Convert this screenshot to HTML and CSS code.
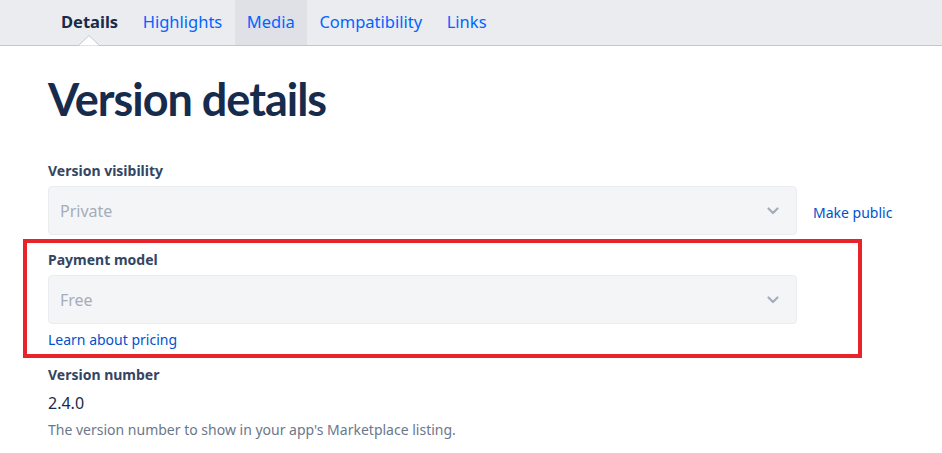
FILE: index.html
```html
<!DOCTYPE html>
<html lang="en">
<head>
<meta charset="utf-8">
<title>Version details</title>
<link rel="stylesheet" href="styles.css">
</head>
<body>
<nav class="tabs">
  <a class="tab tab-active">Details<svg class="caret" width="22" height="11" viewBox="0 0 22 11"><polygon points="0,11 11,0.5 22,11" fill="#ffffff" stroke="#C1C7D0" stroke-width="1"/></svg></a>
  <a class="tab">Highlights</a>
  <a class="tab tab-hover">Media</a>
  <a class="tab">Compatibility</a>
  <a class="tab">Links</a>
</nav>
<main class="content">
  <h1 class="title">Version details</h1>

  <div class="field">
    <div class="label">Version visibility</div>
    <div class="row">
      <div class="select">
        <span class="select-value">Private</span>
        <svg class="chevron" width="12" height="8" viewBox="0 0 12 8"><path d="M1.5 1.5 L6 6 L10.5 1.5" fill="none" stroke="#A5ADBA" stroke-width="2.2" stroke-linecap="round" stroke-linejoin="round"/></svg>
      </div>
      <a class="link side-link">Make public</a>
    </div>
  </div>

  <div class="field field-marked">
    <div class="label">Payment model</div>
    <div class="select">
      <span class="select-value">Free</span>
      <svg class="chevron" width="12" height="8" viewBox="0 0 12 8"><path d="M1.5 1.5 L6 6 L10.5 1.5" fill="none" stroke="#A5ADBA" stroke-width="2.2" stroke-linecap="round" stroke-linejoin="round"/></svg>
    </div>
    <a class="link below-link">Learn about pricing</a>
  </div>

  <div class="field">
    <div class="label">Version number</div>
    <div class="value">2.4.0</div>
    <div class="help">The version number to show in your app's Marketplace listing.</div>
  </div>
</main>
</body>
</html>
```

FILE: styles.css
```css
html, body {
  margin: 0;
  padding: 0;
  background: #ffffff;
}
body {
  font-family: "Noto Sans", "Open Sans", sans-serif;
  color: #172B4D;
  width: 942px;
  height: 453px;
  overflow: hidden;
}
.tabs {
  display: flex;
  height: 46px;
  box-sizing: border-box;
  padding-left: 48px;
  background: #EBECF0;
  border-bottom: 1px solid #C1C7D0;
}
.tab {
  position: relative;
  display: block;
  padding: 0 12.3px;
  line-height: 44px;
  font-size: 16.5px;
  color: #0065FF;
  cursor: pointer;
}
.tab-active {
  color: #172B4D;
  font-weight: 700;
  padding-left: 13px;
}
.tab-hover {
  background: #DFE1E6;
}
.caret {
  position: absolute;
  left: 50%;
  bottom: -1px;
  margin-left: -11px;
  display: block;
}
.content {
  padding: 0 0 0 48px;
}
.title {
  margin: 25px 0 0 0;
  font-family: "Lato", sans-serif;
  font-weight: 700;
  font-size: 45px;
  line-height: 56px;
  letter-spacing: -1px;
  color: #172B4D;
}
.field {
  display: flex;
  flex-direction: column;
  align-items: flex-start;
}
.title + .field {
  margin-top: 34px;
}
.field + .field {
  margin-top: 15px;
}
.label {
  font-size: 14px;
  line-height: 20px;
  font-weight: 700;
  color: #344563;
  margin-bottom: 5px;
}
.row {
  display: flex;
  align-items: center;
  gap: 16px;
}
.select {
  box-sizing: border-box;
  width: 749px;
  height: 49px;
  display: flex;
  align-items: center;
  justify-content: space-between;
  padding: 0 17px 0 11px;
  background: #F4F5F7;
  border: 1px solid #EBECF0;
  border-radius: 4px;
}
.select-value {
  font-size: 16px;
  color: #A5ADBA;
}
.chevron {
  display: block;
}
.link {
  font-size: 14px;
  line-height: 20px;
  color: #0052CC;
  cursor: pointer;
}
.side-link {
  margin-top: 4px;
}
.below-link {
  margin-top: 6px;
}
.field-marked {
  position: relative;
}
.field-marked::after {
  content: "";
  position: absolute;
  left: -25px;
  top: -11px;
  width: 839px;
  height: 119px;
  box-sizing: border-box;
  border: 4px solid #E8232A;
  pointer-events: none;
}
.value {
  font-size: 16px;
  line-height: 24px;
  color: #172B4D;
  margin-top: 1px;
}
.help {
  font-size: 14px;
  line-height: 20px;
  color: #6B778C;
  margin-top: 5px;
}
```
